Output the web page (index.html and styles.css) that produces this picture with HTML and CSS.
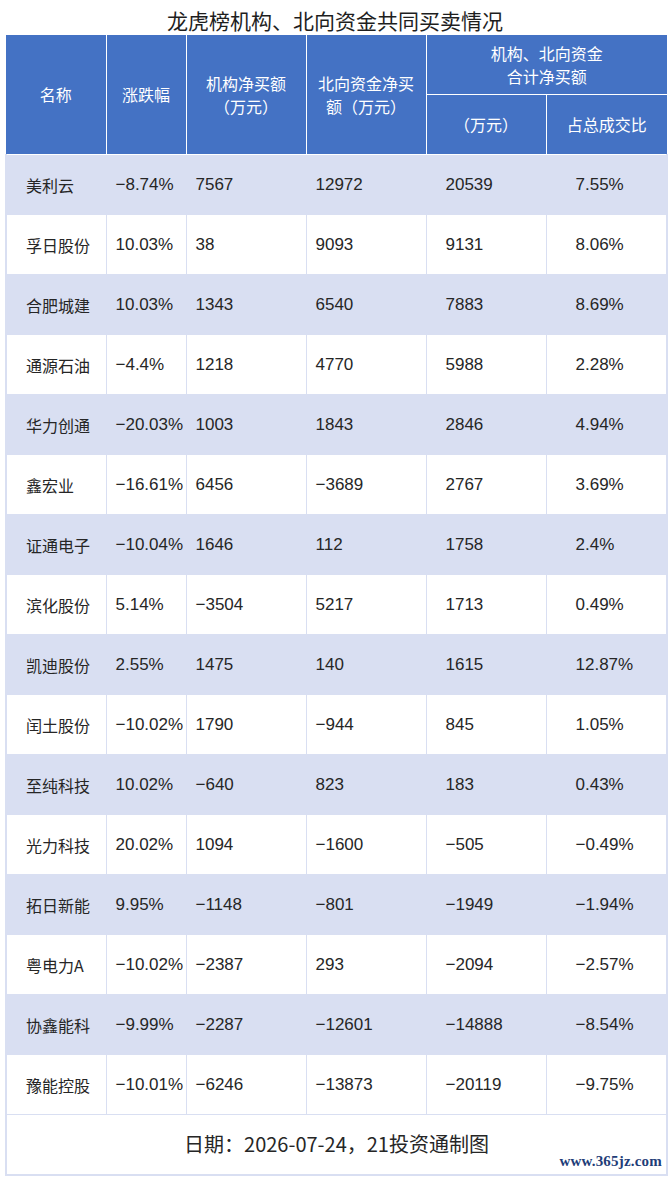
FILE: index.html
```html
<!DOCTYPE html>
<html lang="zh-CN">
<head>
<meta charset="utf-8">
<title>龙虎榜机构、北向资金共同买卖情况</title>
<link rel="stylesheet" href="styles.css">
</head>
<body>
<div class="page">
  <h1 class="title">龙虎榜机构、北向资金共同买卖情况</h1>
  <table class="grid">
    <colgroup>
      <col class="c1"><col class="c2"><col class="c3"><col class="c4"><col class="c5"><col class="c6">
    </colgroup>
    <thead>
      <tr class="h1">
        <th rowspan="2">名称</th>
        <th rowspan="2">涨跌幅</th>
        <th rowspan="2">机构净买额<br>（万元）</th>
        <th rowspan="2" class="wrap">北向资金净买<br>额（万元）</th>
        <th colspan="2">机构、北向资金<br>合计净买额</th>
      </tr>
      <tr class="h2">
        <th>（万元）</th>
        <th>占总成交比</th>
      </tr>
    </thead>
    <tbody>
      <tr class="alt"><td class="name">美利云</td><td class="p2">−8.74%</td><td class="p3">7567</td><td class="p4">12972</td><td class="p5">20539</td><td class="p6">7.55%</td></tr>
      <tr><td class="name">孚日股份</td><td class="p2">10.03%</td><td class="p3">38</td><td class="p4">9093</td><td class="p5">9131</td><td class="p6">8.06%</td></tr>
      <tr class="alt"><td class="name">合肥城建</td><td class="p2">10.03%</td><td class="p3">1343</td><td class="p4">6540</td><td class="p5">7883</td><td class="p6">8.69%</td></tr>
      <tr><td class="name">通源石油</td><td class="p2">−4.4%</td><td class="p3">1218</td><td class="p4">4770</td><td class="p5">5988</td><td class="p6">2.28%</td></tr>
      <tr class="alt"><td class="name">华力创通</td><td class="p2">−20.03%</td><td class="p3">1003</td><td class="p4">1843</td><td class="p5">2846</td><td class="p6">4.94%</td></tr>
      <tr><td class="name">鑫宏业</td><td class="p2">−16.61%</td><td class="p3">6456</td><td class="p4">−3689</td><td class="p5">2767</td><td class="p6">3.69%</td></tr>
      <tr class="alt"><td class="name">证通电子</td><td class="p2">−10.04%</td><td class="p3">1646</td><td class="p4">112</td><td class="p5">1758</td><td class="p6">2.4%</td></tr>
      <tr><td class="name">滨化股份</td><td class="p2">5.14%</td><td class="p3">−3504</td><td class="p4">5217</td><td class="p5">1713</td><td class="p6">0.49%</td></tr>
      <tr class="alt"><td class="name">凯迪股份</td><td class="p2">2.55%</td><td class="p3">1475</td><td class="p4">140</td><td class="p5">1615</td><td class="p6">12.87%</td></tr>
      <tr><td class="name">闰土股份</td><td class="p2">−10.02%</td><td class="p3">1790</td><td class="p4">−944</td><td class="p5">845</td><td class="p6">1.05%</td></tr>
      <tr class="alt"><td class="name">至纯科技</td><td class="p2">10.02%</td><td class="p3">−640</td><td class="p4">823</td><td class="p5">183</td><td class="p6">0.43%</td></tr>
      <tr><td class="name">光力科技</td><td class="p2">20.02%</td><td class="p3">1094</td><td class="p4">−1600</td><td class="p5">−505</td><td class="p6">−0.49%</td></tr>
      <tr class="alt"><td class="name">拓日新能</td><td class="p2">9.95%</td><td class="p3">−1148</td><td class="p4">−801</td><td class="p5">−1949</td><td class="p6">−1.94%</td></tr>
      <tr><td class="name">粤电力A</td><td class="p2">−10.02%</td><td class="p3">−2387</td><td class="p4">293</td><td class="p5">−2094</td><td class="p6">−2.57%</td></tr>
      <tr class="alt"><td class="name">协鑫能科</td><td class="p2">−9.99%</td><td class="p3">−2287</td><td class="p4">−12601</td><td class="p5">−14888</td><td class="p6">−8.54%</td></tr>
      <tr><td class="name">豫能控股</td><td class="p2">−10.01%</td><td class="p3">−6246</td><td class="p4">−13873</td><td class="p5">−20119</td><td class="p6">−9.75%</td></tr>
    </tbody>
    <tfoot>
      <tr><td colspan="6" class="foot">日期：2026-07-24，21投资通制图</td></tr>
    </tfoot>
  </table>
  <div class="mark">www.365jz.com</div>
</div>
</body>
</html>
```

FILE: styles.css
```css
html, body {
  margin: 0;
  padding: 0;
  background: #ffffff;
}

.page {
  position: relative;
  width: 670px;
  height: 1180px;
  font-family: "Liberation Sans", "Noto Sans CJK SC", sans-serif;
  color: #262626;
}

.title {
  margin: 0;
  height: 35px;
  line-height: 40px;
  font-family: "Noto Sans CJK SC", sans-serif;
  font-size: 21px;
  font-weight: 400;
  text-align: center;
  color: #1e1e1e;
}

.grid {
  margin-left: 5px;
  width: 661px;
  border-collapse: collapse;
  table-layout: fixed;
}

.c1 { width: 100px; }
.c2 { width: 80px; }
.c3 { width: 120px; }
.c4 { width: 120px; }
.c5 { width: 120px; }
.c6 { width: 121px; }

thead th {
  background: #4472c4;
  color: #ffffff;
  font-family: "Noto Sans CJK SC", sans-serif;
  font-weight: 400;
  font-size: 16px;
  line-height: 23px;
  border: 1px solid #ffffff;
  padding: 0 6px;
  text-align: center;
  vertical-align: middle;
}

thead tr:first-child th { border-top: none; }
thead tr th:first-child { border-left: none; }
thead tr.h1 th:last-child,
thead tr.h2 th:last-child { border-right: none; }
thead tr.h1 th { height: 59px; }
thead tr.h2 th { height: 59px; }

tbody td {
  height: 59px;
  border: 1px solid #d9dff2;
  font-size: 17px;
  vertical-align: middle;
  white-space: nowrap;
  padding: 0;
}

tbody tr.alt td { background: #d9dff2; }

tbody td:first-child { border-left: 2px solid #d9dff2; }
tbody td:last-child { border-right: 2px solid #d9dff2; }

td.name {
  font-family: "Noto Sans CJK SC", sans-serif;
  font-size: 16px;
  padding-left: 19px;
}
td.p2 { padding-left: 9px; overflow: visible; }
td.p3 { padding-left: 9px; }
td.p4 { padding-left: 9px; }
td.p5 { padding-left: 19px; }
td.p6 { padding-left: 29px; }

tfoot td.foot {
  height: 57px;
  border: 2px solid #d9dff2;
  border-top: 1px solid #d9dff2;
  text-align: center;
  vertical-align: middle;
  font-family: "Noto Sans CJK SC", sans-serif;
  font-size: 20px;
  color: #262626;
  padding: 0 0 2px;
}

.mark {
  position: absolute;
  right: 8px;
  top: 1153px;
  font-family: "Liberation Serif", serif;
  font-weight: 700;
  font-size: 15px;
  color: #1f3d78;
  letter-spacing: 0.2px;
}
```
